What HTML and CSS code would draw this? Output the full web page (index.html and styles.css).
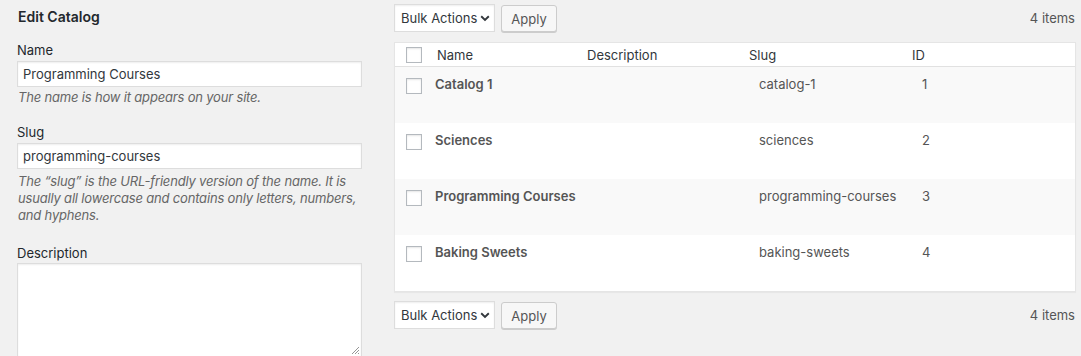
FILE: index.html
```html
<!DOCTYPE html>
<html lang="en">
<head>
<meta charset="utf-8">
<title>Edit Catalog</title>
<link rel="stylesheet" href="styles.css">
</head>
<body>
<div class="page">
  <div class="form-col">
    <h2 class="form-title">Edit Catalog</h2>
    <label class="field-label label-name">Name</label>
    <div class="text-input">Programming Courses</div>
    <p class="help help-name">The name is how it appears on your site.</p>
    <label class="field-label label-slug">Slug</label>
    <div class="text-input">programming-courses</div>
    <p class="help help-slug">The “slug” is the URL-friendly version of the name. It is usually all lowercase and contains only letters, numbers, and hyphens.</p>
    <label class="field-label label-desc">Description</label>
    <div class="textarea">
      <svg class="grip" width="9" height="9" viewBox="0 0 9 9"><path d="M8 1 L1 8 M8 4 L4 8 M8 7 L7 8" stroke="#8a8a8a" stroke-width="0.9" fill="none"/></svg>
    </div>
  </div>
  <div class="list-col">
    <div class="tablenav top">
      <div class="bulk-select">Bulk Actions<svg class="chev" width="10" height="7" viewBox="0 0 10 7"><path d="M1.2 1.3 L5 5 L8.8 1.3" stroke="#32373c" stroke-width="1.9" fill="none"/></svg></div>
      <div class="apply-btn">Apply</div>
      <div class="count">4 items</div>
    </div>
    <div class="table">
      <div class="thead">
        <div class="cb-cell"><span class="checkbox"></span></div>
        <div class="th">Name</div>
        <div class="th">Description</div>
        <div class="th">Slug</div>
        <div class="th">ID</div>
      </div>
      <div class="row alt">
        <div class="cb-cell"><span class="checkbox"></span></div>
        <div class="td name">Catalog 1</div>
        <div class="td"></div>
        <div class="td">catalog-1</div>
        <div class="td">1</div>
      </div>
      <div class="row">
        <div class="cb-cell"><span class="checkbox"></span></div>
        <div class="td name">Sciences</div>
        <div class="td"></div>
        <div class="td">sciences</div>
        <div class="td">2</div>
      </div>
      <div class="row alt">
        <div class="cb-cell"><span class="checkbox"></span></div>
        <div class="td name">Programming Courses</div>
        <div class="td"></div>
        <div class="td">programming-courses</div>
        <div class="td">3</div>
      </div>
      <div class="row">
        <div class="cb-cell"><span class="checkbox"></span></div>
        <div class="td name">Baking Sweets</div>
        <div class="td"></div>
        <div class="td">baking-sweets</div>
        <div class="td">4</div>
      </div>
    </div>
    <div class="tablenav bottom">
      <div class="bulk-select">Bulk Actions<svg class="chev" width="10" height="7" viewBox="0 0 10 7"><path d="M1.2 1.3 L5 5 L8.8 1.3" stroke="#32373c" stroke-width="1.9" fill="none"/></svg></div>
      <div class="apply-btn">Apply</div>
      <div class="count">4 items</div>
    </div>
  </div>
</div>
</body>
</html>
```

FILE: styles.css
```css
* { box-sizing: border-box; }
html, body {
  margin: 0;
  padding: 0;
  background: #f1f1f1;
  overflow: hidden;
}
body {
  font-family: Inter, "Noto Sans", "Liberation Sans", sans-serif;
  font-size: 13px;
  color: #444;
  width: 1081px;
  height: 356px;
}
.page {
  display: flex;
  padding-left: 17px;
  gap: 32px;
}
.form-col {
  width: 345px;
  flex: none;
  display: flex;
  flex-direction: column;
}
.form-title {
  margin: 7px 0 0 1px;
  font-size: 14px;
  line-height: 20px;
  font-weight: 600;
  color: #23282d;
}
.field-label {
  display: block;
  line-height: 18px;
  color: #23282d;
}
.label-name { margin-top: 14px; margin-bottom: 2px; }
.label-slug { margin-top: 17px; margin-bottom: 2px; }
.label-desc { margin-top: 20px; margin-bottom: 1px; }
.text-input {
  height: 26px;
  background: #fff;
  border: 1px solid #ddd;
  box-shadow: inset 0 1px 2px rgba(0,0,0,0.07);
  padding: 0 5px;
  line-height: 24px;
  color: #32373c;
}
.help {
  margin: 0;
  font-style: italic;
  color: #666;
  line-height: 17px;
  padding-left: 1px;
  letter-spacing: -0.18px;
}
.help-name { margin-top: 2px; }
.help-slug { margin-top: 4px; }
.textarea {
  height: 94px;
  background: #fff;
  border: 1px solid #ddd;
  box-shadow: inset 0 1px 2px rgba(0,0,0,0.07);
  display: flex;
  justify-content: flex-end;
  align-items: flex-end;
  padding: 0 1px 1px 0;
}
.grip { display: block; }

.list-col {
  width: 682px;
  flex: none;
}
.tablenav {
  display: flex;
  align-items: center;
  height: 28px;
}
.tablenav.top { margin-top: 4px; margin-bottom: 10px; }
.tablenav.bottom { margin-top: 9px; }
.bulk-select {
  width: 101px;
  height: 28px;
  background: #fff;
  border: 1px solid #ddd;
  box-shadow: inset 0 1px 2px rgba(0,0,0,0.07);
  display: flex;
  align-items: center;
  justify-content: space-between;
  padding: 0 4px 0 6px;
  color: #32373c;
}
.chev { display: block; margin-top: 1px; }
.apply-btn {
  margin-left: 6px;
  width: 56px;
  height: 27px;
  margin-top: 1px;
  background: #f7f7f7;
  border: 1px solid #ccc;
  border-radius: 3px;
  box-shadow: 0 1px 0 #ccc;
  display: flex;
  align-items: center;
  justify-content: center;
  color: #555;
}
.count {
  margin-left: auto;
  color: #555;
  padding-right: 1px;
}
.table {
  background: #fff;
  border: 1px solid #e5e5e5;
  box-shadow: 0 1px 1px rgba(0,0,0,0.04);
}
.thead {
  display: grid;
  grid-template-columns: 42px 150px 162px 163px 1fr;
  height: 24px;
  border-bottom: 1px solid #e1e1e1;
  align-items: center;
  color: #32373c;
}
.thead .cb-cell { padding-left: 11px; }
.th { line-height: 18px; }
.row {
  display: grid;
  grid-template-columns: 40px 152px 172px 163px 1fr;
  height: 56px;
  align-items: start;
  background: #fff;
}
.row.alt { background: #f9f9f9; }
.row .cb-cell { padding: 11px 0 0 11px; }
.td {
  padding-top: 8px;
  line-height: 18px;
  color: #555;
}
.td.name { font-weight: 600; }
.checkbox {
  display: block;
  width: 16px;
  height: 16px;
  background: #fff;
  border: 1px solid #b4b9be;
  box-shadow: inset 0 1px 2px rgba(0,0,0,0.1);
}
```
